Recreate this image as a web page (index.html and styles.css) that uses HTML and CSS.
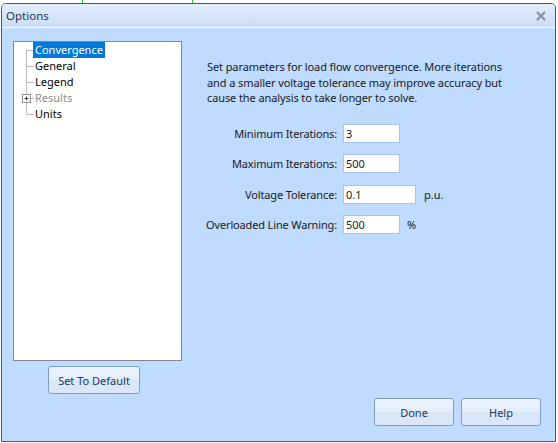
FILE: index.html
```html
<!DOCTYPE html>
<html>
<head>
<meta charset="utf-8">
<link rel="stylesheet" href="styles.css">
</head>
<body>
<div class="bg-lines"><span class="gl gl1"></span><span class="gl gl2"></span></div>
<div class="window">
  <div class="titlebar">
    <span class="title">Options</span>
    <svg class="close" width="10" height="10" viewBox="0 0 10 10"><path d="M1 1 L9 9 M9 1 L1 9" stroke="#8a8f98" stroke-width="2"/></svg>
  </div>
  <div class="content">
    <div class="left">
      <div class="tree">
        <svg class="tree-lines" width="20" height="80" viewBox="0 0 20 80">
          <path d="M12.5 8.5 V72.5 M12.5 8.5 H20 M12.5 24.5 H20 M12.5 40.5 H20 M12.5 56.5 H20 M12.5 72.5 H20" stroke="#808080" stroke-width="1" stroke-dasharray="1 1" fill="none"/>
          <rect x="8.5" y="52.5" width="8" height="8" fill="#fff" stroke="#919191"/>
          <path d="M10.5 56.5 H14.5 M12.5 54.5 V58.5" stroke="#333" stroke-width="1"/>
        </svg>
        <ul class="items">
          <li class="item selected">Convergence</li>
          <li class="item">General</li>
          <li class="item">Legend</li>
          <li class="item disabled">Results</li>
          <li class="item">Units</li>
        </ul>
      </div>
      <button class="btn btn-default">Set To Default</button>
    </div>
    <div class="right">
      <p class="desc">Set parameters for load flow convergence. More iterations and a smaller voltage tolerance may improve accuracy but cause the analysis to take longer to solve.</p>
      <div class="form">
        <div class="row r1"><label>Minimum Iterations:</label><div class="field w56">3</div></div>
        <div class="row r2"><label>Maximum Iterations:</label><div class="field w56">500</div></div>
        <div class="row r3"><label>Voltage Tolerance:</label><div class="field w72">0.1</div><span class="unit">p.u.</span></div>
        <div class="row r4"><label>Overloaded Line Warning:</label><div class="field w56">500</div><span class="unit pct">%</span></div>
      </div>
      <div class="actions">
        <button class="btn btn-act">Done</button>
        <button class="btn btn-act">Help</button>
      </div>
    </div>
  </div>
</div>
</body>
</html>
```
FILE: styles.css
```css
html, body {
  margin: 0;
  padding: 0;
  background: #ffffff;
  width: 558px;
  height: 443px;
  overflow: hidden;
  font-family: "Noto Sans", "Open Sans", sans-serif;
  font-size: 11px;
  color: #1a1a1a;
}
.bg-lines { position: absolute; left: 0; top: 0; width: 558px; height: 4px; }
.gl { position: absolute; top: 0; width: 1px; height: 3px; background: #3cc83c; }
.gl1 { left: 82px; }
.gl2 { left: 192px; }

.window {
  position: relative;
  margin: 3px 0 0 1px;
  width: 553px;
  height: 437px;
  border: 1px solid #3c5a84;
  border-radius: 5px 5px 0 0;
  background: #bfdbff;
  display: flex;
  flex-direction: column;
}
.titlebar {
  height: 23px;
  flex: none;
  background: linear-gradient(#e4eefc, #cadcf7);
  border-bottom: 1px solid #ffffff;
  border-radius: 4px 4px 0 0;
  display: flex;
  align-items: center;
  justify-content: space-between;
  padding: 0 9px 0 4px;
}
.title {
  color: #1e395b;
  font-size: 11.5px;
}
.close { display: block; }

.content {
  flex: 1;
  display: flex;
  padding: 13px 0 0 11px;
}
.left {
  width: 169px;
  flex: none;
  display: flex;
  flex-direction: column;
}
.tree {
  position: relative;
  height: 318px;
  border: 1px solid #828790;
  background: #ffffff;
}
.tree-lines {
  position: absolute;
  left: 0;
  top: 0;
}
.items {
  list-style: none;
  margin: 0;
  padding: 0 0 0 19px;
}
.item {
  height: 16px;
  line-height: 16px;
  padding: 0 2px;
  display: table;
  color: #000;
}
.item.selected {
  background: #0078d7;
  color: #ffffff;
}
.item.disabled { color: #8d8d8d; }

.btn {
  font-family: inherit;
  font-size: 11px;
  color: #1e395b;
  border: 1px solid #7f9dc6;
  border-radius: 3px;
  background: linear-gradient(#ebf3fd 0%, #e4eefb 48%, #d8e6f8 52%, #dce8f8 100%);
  padding: 0;
}
.btn-default {
  margin: 5px 0 0 35px;
  width: 92px;
  height: 28px;
}

.right {
  flex: 1;
  display: flex;
  flex-direction: column;
  padding-left: 25px;
}
.desc {
  margin: 18px 0 0 0;
  width: 315px;
  line-height: 15.5px;
  letter-spacing: -0.1px;
}
.form {
  display: flex;
  flex-direction: column;
  margin-top: 18px;
}
.row {
  display: flex;
  align-items: center;
  height: 19px;
}
.r2, .r4 { margin-top: 11px; }
.r3 { margin-top: 12px; }
.row label {
  width: 130px;
  flex: none;
  display: flex;
  justify-content: flex-end;
  white-space: nowrap;
  margin-right: 6px;
  letter-spacing: -0.15px;
}
.field {
  height: 17px;
  line-height: 17px;
  border: 1px solid #a5c3ec;
  background: #ffffff;
  padding-left: 2px;
  box-sizing: content-box;
}
.w56 { width: 53px; }
.w72 { width: 69px; }
.unit { margin-left: 8px; }
.unit.pct { margin-left: 7px; }

.actions {
  margin-top: auto;
  margin-bottom: 15px;
  display: flex;
  justify-content: flex-end;
  gap: 7px;
  padding-right: 14px;
}
.btn-act {
  width: 80px;
  height: 28px;
}
```
